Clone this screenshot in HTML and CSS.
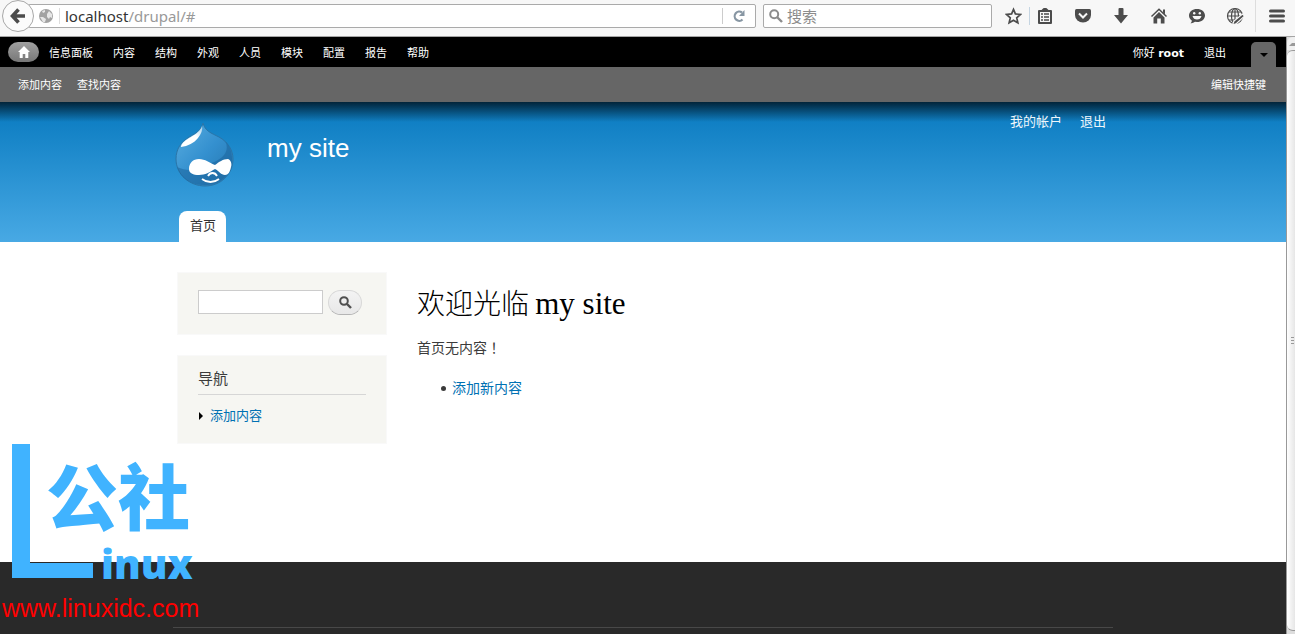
FILE: index.html
```
<!DOCTYPE html>
<html lang="zh-CN">
<head>
	<meta charset="utf-8">
	<title>欢迎光临 my site | my site</title>
	<link rel="stylesheet" href="styles.css">
</head>
<body>
	<!-- 浏览器工具栏 -->
	<div class="browser">
		<button class="back" aria-label="后退">
			<svg width="16" height="16" viewBox="0 0 16 16"><path d="M8.5 1.500L2.500 8l6 6.500M3 8h12" fill="none" stroke="#4c4c4c" stroke-width="3.600"/></svg>
		</button>
		<div class="url-bar">
			<svg class="globe" width="14" height="14" viewBox="0 0 14 14"><circle cx="7" cy="7" r="7" fill="#a2a2a2"/><path d="M1 8l3 0 3 2-1 3-2 0zM8 5l2-3 3 3 0 4-2-1-1 2-2-2zM3 2l3-1 0 2-2 1z" fill="#e6e6e6"/></svg>
			<span class="url">localhost<span class="path">/drupal/#</span></span>
			<button class="reload" aria-label="刷新">
				<svg width="12" height="12" viewBox="0 0 12 12"><path d="M9.500 9.500A4.600 4.600 0 1 1 9 2.500" fill="none" stroke="#8796a3" stroke-width="2.200"/><path d="M11.500 0v6H6z" fill="#8796a3"/></svg>
			</button>
		</div>
		<div class="search-bar">
			<svg width="14" height="14" viewBox="0 0 14 14"><circle cx="5.200" cy="5.200" r="4" fill="none" stroke="#8c8c8c" stroke-width="2"/><path d="M8 8l5 5" stroke="#8c8c8c" stroke-width="2.400"/></svg>
			<input type="text" placeholder="搜索" aria-label="搜索">
		</div>
		<div class="tools">
			<button aria-label="收藏"><svg width="18" height="18" viewBox="0 0 18 18"><path d="M9 2l2 4.800 5.400.5-4 3.600 1.200 5.300L9 13.500l-4.600 2.700 1.200-5.300-4-3.600L7 6.800z" fill="none" stroke="#4c4c4c" stroke-width="1.800"/></svg></button>
			<button aria-label="书签"><svg width="18" height="18" viewBox="0 0 18 18"><path d="M6 4l2-2h2l2 2M3 4h12v12H3z" fill="none" stroke="#4c4c4c" stroke-width="2" stroke-linejoin="round"/><path d="M5 7h2M8 7h5M5 10h2M8 10h5M5 13h2M8 13h5" stroke="#4c4c4c" stroke-width="1.400"/></svg></button>
			<button aria-label="Pocket"><svg width="18" height="18" viewBox="0 0 18 18"><path d="M1 3.500q0-1.500 1.500-1.500h13q1.500 0 1.500 1.500V8a8 7.500 0 0 1-16 0z" fill="#4c4c4c"/><path d="M5 6.500l4 4 4-4" fill="none" stroke="#f7f7f7" stroke-width="2"/></svg></button>
			<button aria-label="下载"><svg width="18" height="18" viewBox="0 0 18 18"><path d="M6.500 2q0-1 1-1h3q1 0 1 1v6H16L9 16.500 2 8h4.500z" fill="#4c4c4c"/></svg></button>
			<button aria-label="主页"><svg width="18" height="18" viewBox="0 0 18 18"><path d="M1.500 9.500L9 2.200l7.500 7.300" fill="none" stroke="#4c4c4c" stroke-width="1.500"/><path d="M13 2.500h2v5l-2-2zM9 5l5.500 5.500v6h-3.700v-5H7.200v5H3.500v-6z" fill="#4c4c4c"/></svg></button>
			<button aria-label="聊天"><svg width="18" height="18" viewBox="0 0 18 18"><path d="M9 2c4.500 0 8 2.700 8 6.500S13.500 15 9 15l-2-.2C5.500 16 4 16.500 2.500 16.200q1.500-1 1.300-2.800C2 12.200 1 10.500 1 8.500 1 4.700 4.500 2 9 2z" fill="#4c4c4c"/><circle cx="6.200" cy="6.200" r="1.200" fill="#f7f7f7"/><circle cx="11.800" cy="6.200" r="1.200" fill="#f7f7f7"/><path d="M4.500 9h9q-1 3.500-4.500 3.500T4.500 9z" fill="#f7f7f7"/></svg></button>
			<button aria-label="代理"><svg width="18" height="18" viewBox="0 0 18 18"><g fill="none" stroke="#4c4c4c" stroke-width="1.200"><circle cx="9" cy="9" r="7.500"/><ellipse cx="9" cy="9" rx="3.500" ry="7.500"/><path d="M9 1.500v15M1.500 9h15M3 5h12M3 13h12"/></g><path d="M16.500 7l2 2-8 7.500-4 1.500 1.500-4z" fill="#4c4c4c" stroke="#f7f7f7" stroke-width="1.200"/></svg></button>
		</div>
		<button class="menu" aria-label="菜单"><svg width="18" height="18" viewBox="0 0 18 18"><path d="M2.500 4h13M2.500 9h13M2.500 14h13" stroke="#4c4c4c" stroke-width="3" stroke-linecap="round"/></svg></button>
	</div>

	<div class="window">
		<div class="page">
			<!-- 管理工具栏 -->
			<nav class="toolbar">
				<a class="home" href="#" aria-label="首页"><svg width="12" height="12" viewBox="0 0 12 12"><path d="M6 0l6 6h-1.700v6H7.300V8H4.700v4h-3V6H0z" fill="#fff"/></svg></a>
				<a href="#">信息面板</a>
				<a href="#">内容</a>
				<a href="#">结构</a>
				<a href="#">外观</a>
				<a href="#">人员</a>
				<a href="#">模块</a>
				<a href="#">配置</a>
				<a href="#">报告</a>
				<a href="#">帮助</a>
				<a class="user" href="#">你好 <strong>root</strong></a>
				<a href="#">退出</a>
				<button class="toggle" aria-label="隐藏快捷键"></button>
			</nav>
			<nav class="drawer">
				<a href="#">添加内容</a>
				<a href="#">查找内容</a>
				<a class="edit" href="#">编辑快捷键</a>
			</nav>

			<header class="header">
				<div class="container">
					<div class="branding">
						<a class="logo" href="#" aria-label="首页">
							<svg width="60" height="66" viewBox="0 0 60 66">
								<defs>
									<linearGradient id="drop" x1="0" y1="0" x2="1" y2="1">
										<stop offset="0" stop-color="#5aaee0"/>
										<stop offset=".5" stop-color="#3490cf"/>
										<stop offset="1" stop-color="#2473ab"/>
									</linearGradient>
									<linearGradient id="shine" x1="1" y1="0" x2="0" y2="1">
										<stop offset="0" stop-color="#fff" stop-opacity=".5"/>
										<stop offset=".4" stop-color="#fff"/>
										<stop offset="1" stop-color="#fff"/>
									</linearGradient>
								</defs>
								<path d="M28 1c2 8 8 10 16 14 9 5 14 13 14 22 0 16-13 27-28 27S1 53 1 37c0-10 5-17 13-22 7-4 12-6 14-14z" fill="url(#drop)" stroke="#2a75a8"/>
								<path d="M50 19c5 9-1 17-11 21-12 5-22 12-37 5 4 12 14 18 28 18 15 0 27-10 27-26 0-7-2-13-7-18z" fill="#1b659c" opacity=".55"/>
								<path d="M27 4c-3 7-8 9-13 12-5 3-8 6-8 9 7-1 13-4 17-9 3-4 5-8 4-12z" fill="url(#shine)"/>
								<path d="M14 47c0-6 4-10 10-10 6 0 11 4 16 6 4-3 8-6 13-6 3 1 4 5 3 8-1 5-3 8-6 8-4 0-6-4-10-6-5 3-10 6-16 6s-10-2-10-6z" fill="#fff"/>
								<path d="M33 54c2-4 7-4 9 0M27 57c5 4 12 4 17 0" fill="none" stroke="#fff" stroke-width="1.800"/>
							</svg>
						</a>
						<a class="site-name" href="#">my site</a>
						<nav class="secondary">
							<a href="#">我的帐户</a>
							<a href="#">退出</a>
						</nav>
					</div>
					<a class="tab" href="#">首页</a>
				</div>
			</header>

			<main class="main container">
				<aside class="sidebar">
					<form class="block search-block">
						<input type="text" aria-label="搜索">
						<button type="button" aria-label="搜索"><svg width="13" height="13" viewBox="0 0 13 13"><circle cx="5" cy="5" r="3.800" fill="none" stroke="#505050" stroke-width="2"/><path d="M8 8l4 4" stroke="#505050" stroke-width="2.400"/></svg></button>
					</form>
					<div class="block nav-block">
						<h2>导航</h2>
						<ul>
							<li><a href="#">添加内容</a></li>
						</ul>
					</div>
				</aside>
				<section class="content">
					<h1>欢迎光临 <span>my site</span></h1>
					<p>首页无内容<span class="punct" lang="zh-TW">！</span></p>
					<ul>
						<li><a href="#">添加新内容</a></li>
					</ul>
				</section>
			</main>

			<footer class="footer">
				<div class="footer-line"></div>
			</footer>
		</div>
		<div class="scrollbar">
			<div class="arrow"></div>
			<div class="thumb"><i></i><i></i><i></i></div>
		</div>
	</div>

	<!-- 水印 -->
	<div class="watermark">
		<div class="mark">
			<span class="cn">公社</span>
			<span class="en">inux</span>
		</div>
		<span class="address">www.linuxidc.com</span>
	</div>
</body>
</html>
```
FILE: styles.css
```
* {
	box-sizing: border-box;
}
body {
	display: flex;
	flex-direction: column;
	height: 100vh;
	margin: 0;
	overflow: hidden;
	font-family: "DejaVu Sans", "Noto Sans CJK SC", sans-serif;
	background: #fff;
}
a {
	color: #0071b3;
	text-decoration: none;
}
button {
	display: flex;
	align-items: center;
	justify-content: center;
	padding: 0;
	border: 0;
	background: none;
}
input {
	min-width: 0;
	padding: 0;
	border: 0;
	outline: 0;
}
ul {
	margin: 0;
	padding: 0;
}

/* 浏览器工具栏 */
.browser {
	display: flex;
	align-items: center;
	flex: none;
	height: 37px;
	padding: 0 9px 4px 2px;
	border-bottom: 1px solid #a5a5a5;
	background: #f7f7f7;
}
.back {
	z-index: 1;
	width: 32px;
	height: 32px;
	border: 1px solid #a8a8a8;
	border-radius: 50%;
	background: #fbfbfb;
}
.url-bar,
.search-bar {
	display: flex;
	align-items: center;
	height: 24px;
	border: 1px solid #aaa;
	border-radius: 2px;
	background: #fff;
}
.url-bar {
	flex: 1;
	margin-left: -6px;
	padding-left: 10px;
}
.url {
	flex: 1;
	margin-left: 6px;
	padding-left: 5px;
	border-left: 1px solid #ddd;
	font: 15px/16px "Noto Sans", sans-serif;
	color: #333;
}
.path {
	color: #999;
}
.reload {
	width: 33px;
	height: 16px;
	border-left: 1px solid #ccc;
}
.search-bar {
	width: 229px;
	margin-left: 7px;
	padding-left: 5px;
}
.search-bar input {
	flex: 1;
	margin-left: 4px;
	font: 15px/20px "Noto Sans CJK SC", sans-serif;
}
.search-bar input::placeholder {
	color: #8c8c8c;
}
.tools {
	display: flex;
	gap: 20px;
	margin-left: 13px;
}
.tools button:first-child {
	width: 25px;
	margin-right: -14px;
	padding-right: 7px;
	border-right: 1px solid #c5d5e2;
}
.menu {
	height: 32px;
	margin-left: 11px;
	padding-left: 12px;
	border-left: 1px solid #ddd;
}

.window {
	display: flex;
	flex: 1;
	min-height: 0;
}
.page {
	display: flex;
	flex: 1;
	flex-direction: column;
	min-width: 0;
}

/* 管理工具栏 */
.toolbar,
.drawer {
	display: flex;
	align-items: center;
	flex: none;
	font-size: 11px;
	line-height: 16px;
}
.toolbar a,
.drawer a {
	padding-top: 3px;
	color: #fff;
}
.toolbar {
	gap: 20px;
	height: 30px;
	padding: 0 10px 0 8px;
	background: #000;
}
.toolbar .home {
	display: flex;
	align-items: center;
	justify-content: center;
	width: 31px;
	height: 20px;
	margin-right: -10px;
	padding: 0;
	border-radius: 10px;
	background: linear-gradient(#a0a0a0, #777);
}
.toolbar .user,
.drawer .edit {
	margin-left: auto;
}
.toggle {
	align-self: flex-end;
	width: 25px;
	height: 25px;
	margin-left: 5px;
	border-radius: 5px 5px 0 0;
	background: #666;
}
.toggle::before {
	content: "";
	border: 4px solid transparent;
	border-top-color: #000;
	border-bottom: 0;
}
.drawer {
	gap: 15px;
	height: 35px;
	padding: 0 20px 0 18px;
	background: #666;
}

/* 页头 */
.container {
	width: 100%;
	max-width: 960px;
	margin: 0 auto;
}
.header {
	flex: none;
	background: linear-gradient(rgba(0, 0, 0, .7), rgba(0, 0, 0, 0) 20px), linear-gradient(#0779bf, #48a9e4);
}
.header .container {
	display: flex;
	flex-direction: column;
	align-items: flex-start;
	height: 140px;
	padding: 0 17px 0 12px;
}
.branding {
	display: flex;
	align-self: stretch;
	flex: 1;
}
.logo {
	margin-top: 20px;
}
.site-name {
	margin: 30px 0 0 32px;
	font: 26px/32px "Liberation Sans", sans-serif;
	color: #fff;
}
.secondary {
	display: flex;
	gap: 18px;
	margin: 11px 0 0 auto;
	font-size: 13px;
	line-height: 18px;
}
.secondary a {
	color: #eef6fb;
}
.tab {
	margin-left: 4px;
	padding: 5px 10px 6px 11px;
	border-radius: 8px 8px 0 0;
	font-size: 13px;
	line-height: 20px;
	color: #333;
	background: #fff;
}

/* 正文 */
.main {
	display: flex;
	gap: 30px;
	flex: 1;
	padding: 30px 15px 0 14px;
}
.sidebar {
	display: flex;
	flex-direction: column;
	gap: 20px;
	width: 210px;
}
.block {
	padding: 14px 20px;
	border: 1px solid #f9f9f9;
	background: #f6f6f2;
}
.search-block {
	display: flex;
	gap: 5px;
	height: 63px;
	padding-top: 17px;
}
.search-block input {
	width: 125px;
	height: 24px;
	border: 1px solid #ccc;
	background: #fff;
}
.search-block button {
	width: 34px;
	height: 25px;
	border: 1px solid #d8d8d8;
	border-bottom-color: #b4b4b4;
	border-radius: 13px;
	background: linear-gradient(#f3f3f3, #e8e8e8);
}
.nav-block {
	height: 89px;
	padding-top: 12px;
}
.nav-block h2 {
	margin: 0 0 10px;
	padding-bottom: 4px;
	border-bottom: 1px solid #d6d6d6;
	font-size: 15px;
	font-weight: normal;
	line-height: 22px;
	color: #3b3b3b;
}
.nav-block li {
	display: flex;
	align-items: center;
	gap: 7px;
	font-size: 13px;
	line-height: 22px;
}
.nav-block li::before {
	content: "";
	margin-left: 1px;
	border: 4px solid transparent;
	border-left-color: #000;
	border-right: 0;
}
.content {
	flex: 1;
	color: #3b3b3b;
}
.content h1 {
	margin: 10px 0 12px;
	font: 300 28px/40px "Noto Sans CJK SC", sans-serif;
	color: #000;
}
.content h1 span {
	font-family: "Liberation Serif", serif;
	font-size: 31px;
	font-weight: normal;
}
.content p,
.content li {
	margin: 0;
	font-size: 14px;
	line-height: 22px;
}
.punct {
	font-family: "Noto Sans CJK TC", sans-serif;
}
.content ul {
	margin-top: 18px;
	padding-left: 24px;
	list-style: none;
}
.content li {
	display: flex;
	align-items: center;
	gap: 6px;
}
.content li::before {
	content: "";
	width: 5px;
	height: 5px;
	border-radius: 50%;
	background: #3b3b3b;
}

.footer {
	flex: none;
	height: 72px;
	padding: 65px 0 0;
	background: #292929;
}
.footer-line {
	max-width: 940px;
	margin: 0 auto;
	border-top: 1px solid #484848;
}

/* 滚动条 */
.scrollbar {
	display: flex;
	flex-direction: column;
	width: 9px;
	padding-bottom: 3px;
	border-left: 1px solid #999;
	background: #ddd;
}
.arrow {
	height: 13px;
	padding: 6px 0 0 2px;
	border-radius: 6px 0 0 0;
	background: #f0f0f0;
}
.arrow::before {
	content: "";
	display: block;
	width: 6px;
	border: 3px solid transparent;
	border-top: 0;
	border-bottom-color: #999;
}
.thumb {
	display: flex;
	flex: 1;
	flex-direction: column;
	align-items: flex-end;
	justify-content: center;
	gap: 2px;
	padding-right: 1px;
	border: 1px solid #999;
	border-width: 1px 0;
	border-radius: 6px 0 0 6px;
	background: linear-gradient(90deg, #fff, #e6e6e6);
}
.thumb i {
	width: 3px;
	height: 1px;
	background: #999;
}

/* 水印 */
.watermark {
	position: absolute;
	left: 0;
	bottom: 0;
	width: 204px;
	height: 190px;
}
.mark {
	position: relative;
	height: 135px;
	margin-left: 12px;
	color: #40b3ff;
}
.mark::before {
	content: "";
	position: absolute;
	width: 81px;
	height: 134px;
	background: linear-gradient(#40b3ff, #40b3ff) left / 18px 100% no-repeat, linear-gradient(#40b3ff, #40b3ff) bottom / 100% 15px no-repeat;
}
.cn {
	position: absolute;
	top: 9px;
	left: 34px;
	font: 900 72px/80px "Noto Sans CJK SC", sans-serif;
}
.en {
	position: absolute;
	top: 100px;
	left: 89px;
	font: 800 40px/40px "Open Sans", sans-serif;
}
.address {
	display: block;
	padding-left: 2px;
	font: 25px/58px "Liberation Sans", sans-serif;
	color: #f00;
}
```
